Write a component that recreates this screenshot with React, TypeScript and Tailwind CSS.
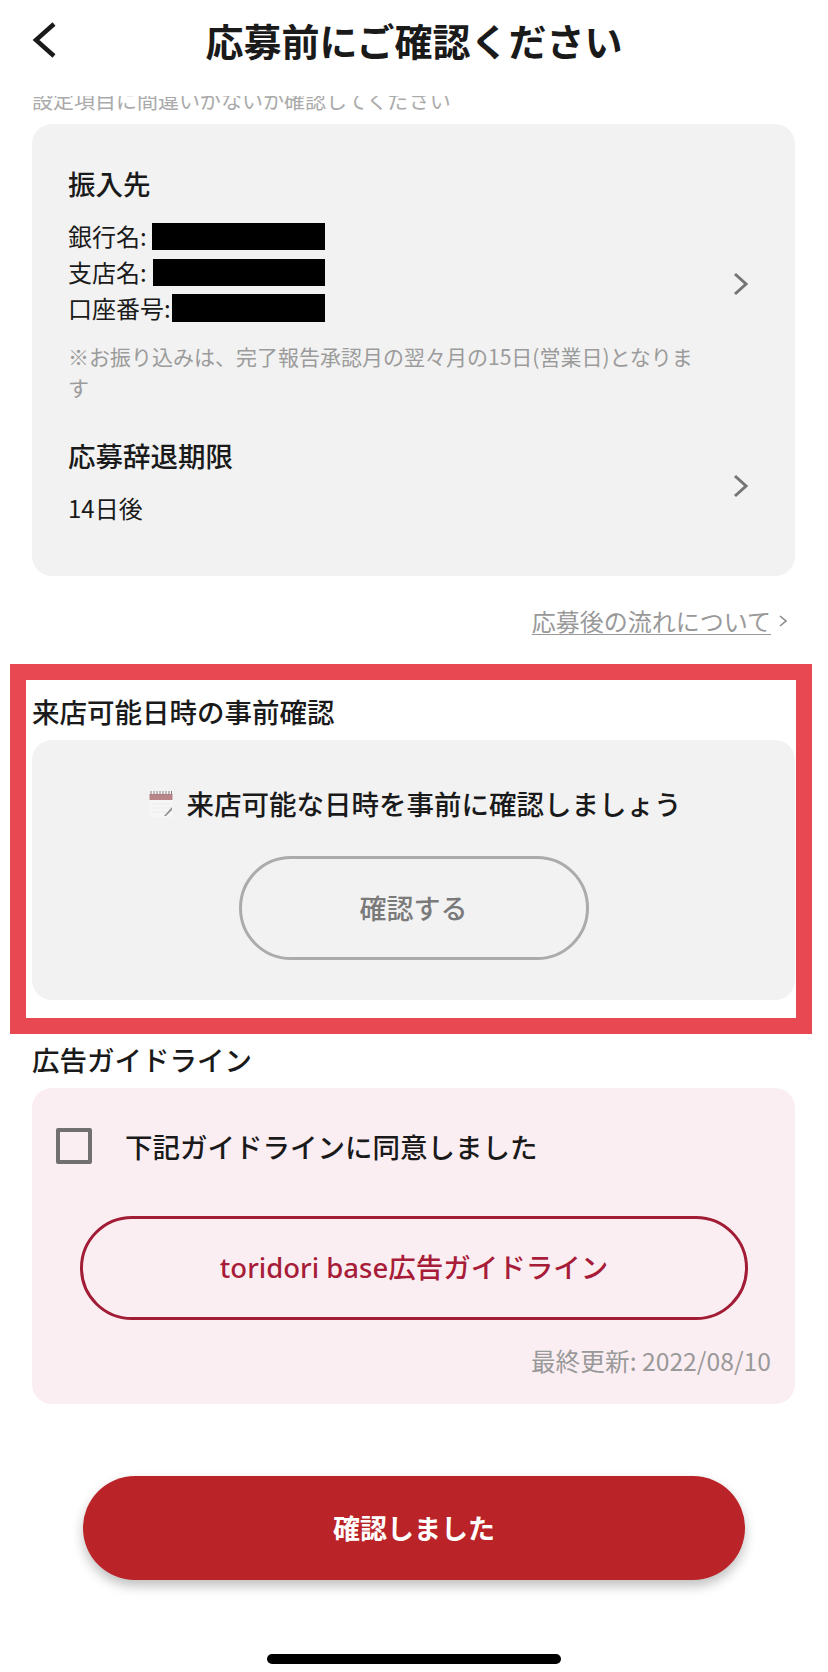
function NoteIcon() {
  return (
    <svg viewBox="0 0 24 27" className="w-[24px] h-[27px] shrink-0">
      <rect x="0.5" y="2" width="23" height="25" fill="#f7f6f6" />
      <rect x="0.5" y="4" width="23" height="6" fill="#b98488" />
      <path d="M2 1v4M5 1v4M8 1v4M11 1v4M14 1v4M17 1v4M20 1v4M22.5 1v4" stroke="#8a7a7c" strokeWidth="1" />
      <path d="M3 14h18M3 18h18M3 22h14" stroke="#ebe9e9" strokeWidth="1" />
      <path d="M15 26l8-9v3l-6 6z" fill="#8f8f8f" />
    </svg>
  );
}

function RowChevron({ className }: { className?: string }) {
  return (
    <svg viewBox="0 0 15 24" fill="none" className={`w-[15px] h-[24px] shrink-0 ${className ?? ''}`}>
      <path d="M2 2l11 10L2 22" stroke="#757575" strokeWidth="3" />
    </svg>
  );
}

export default function App() {
  return (
    <div className="w-[828px] h-[1672px] overflow-hidden bg-white text-[#1a1a1a] font-['Noto_Sans_CJK_JP','Noto_Sans',sans-serif]">
      {/* Header */}
      <header className="relative z-10 h-[96px] bg-white grid grid-cols-[1fr_auto_1fr] items-center pb-[16px] px-[32px]">
        <svg viewBox="0 0 24 36" fill="none" className="w-[24px] h-[36px]">
          <path d="M22 2L4 18l18 16" stroke="#1a1a1a" strokeWidth="4.5" />
        </svg>
        <h1 className="text-[38px] leading-[48px] font-bold text-[#1a1a1a]">応募前にご確認ください</h1>
        <div />
      </header>
      <p className="-mt-[11px] px-[32px] text-[21px] leading-[28px] text-[#aaaaaa]">設定項目に間違いがないか確認してください</p>

      {/* Transfer details */}
      <section className="mt-[11px] ml-[32px] w-[763px] h-[452px] rounded-[20px] bg-[#f2f2f2] pt-[41px] pl-[36px] pr-[47px]">
        <div className="flex items-center justify-between">
          <div className="w-[632px]">
            <h2 className="text-[27.5px] leading-[36px] font-medium">振入先</h2>
            <div className="mt-[17px] text-[24px] leading-[36px]">
              <div className="flex items-center">銀行名:<span className="ml-[5px] w-[173px] h-[27px] bg-black" /></div>
              <div className="flex items-center">支店名:<span className="ml-[6px] w-[172px] h-[27px] bg-black" /></div>
              <div className="flex items-center">口座番号:<span className="ml-[1px] w-[153px] h-[28px] bg-black" /></div>
            </div>
            <p className="mt-[15px] text-[21px] leading-[31px] text-[#9b9b9b]">※お振り込みは、完了報告承認月の翌々月の15日(営業日)となります</p>
          </div>
          <RowChevron />
        </div>
        <div className="mt-[34px] flex items-center justify-between">
          <div>
            <h2 className="text-[27.5px] leading-[36px] font-medium">応募辞退期限</h2>
            <p className="mt-[17px] text-[24px] leading-[36px]">14日後</p>
          </div>
          <RowChevron className="mt-[8px]" />
        </div>
      </section>

      <div className="mt-[29px] pr-[41px] flex items-center justify-end text-[24px] leading-[32px] text-[#999999]">
        <a className="underline underline-offset-[3px] decoration-[1px]">応募後の流れについて</a>
        <svg viewBox="0 0 8 12" fill="none" className="ml-[8px] w-[8px] h-[12px]">
          <path d="M1 1l6 5-6 5" stroke="#8a8a8a" strokeWidth="1.6" />
        </svg>
      </div>

      {/* Visit date check, framed */}
      <section className="mt-[27px] ml-[10px] w-[802px] border-[16px] border-[#e84852] pt-[13px] pb-[18px] pl-[6px] pr-[1px]">
        <h2 className="text-[27.5px] leading-[36px] font-medium">来店可能日時の事前確認</h2>
        <div className="mt-[11px] h-[260px] rounded-[20px] bg-[#f2f2f2] pt-[45px] flex flex-col items-center">
          <div className="flex items-center gap-[14px] pl-[3px] text-[27.5px] leading-[36px] font-medium">
            <NoteIcon />
            <span>来店可能な日時を事前に確認しましょう</span>
          </div>
          <button className="mt-[35px] w-[350px] h-[104px] rounded-full border-[3px] border-[#ababab] text-[27px] font-medium text-[#7a7a7a]">確認する</button>
        </div>
      </section>

      {/* Guideline */}
      <h2 className="mt-[7px] ml-[32px] text-[27.5px] leading-[36px] font-medium">広告ガイドライン</h2>
      <section className="mt-[11px] ml-[32px] w-[763px] h-[316px] rounded-[20px] bg-[#fbeef3] pt-[40px]">
        <div className="flex items-center pl-[24px] gap-[33px]">
          <span className="w-[36px] h-[36px] rounded-[2px] border-[4px] border-[#707070]" />
          <span className="text-[27.5px] leading-[36px] font-medium">下記ガイドラインに同意しました</span>
        </div>
        <button className="mt-[52px] ml-[48px] w-[668px] h-[104px] rounded-full border-[3px] border-[#a11c35] text-[27.5px] font-medium text-[#a71c38] font-['Noto_Sans','Noto_Sans_CJK_JP',sans-serif]">toridori base広告ガイドライン</button>
        <p className="mt-[22px] pr-[24px] text-right text-[24.7px] leading-[36px] text-[#999999]">最終更新: 2022/08/10</p>
      </section>

      <button className="block mt-[72px] mx-auto w-[662px] h-[104px] rounded-full bg-[#ba2428] text-white text-[27px] font-bold shadow-[0_6px_12px_rgba(0,0,0,0.25)]">確認しました</button>

      <div className="mt-[74px] mx-auto w-[294px] h-[10px] rounded-full bg-black" />
    </div>
  );
}
